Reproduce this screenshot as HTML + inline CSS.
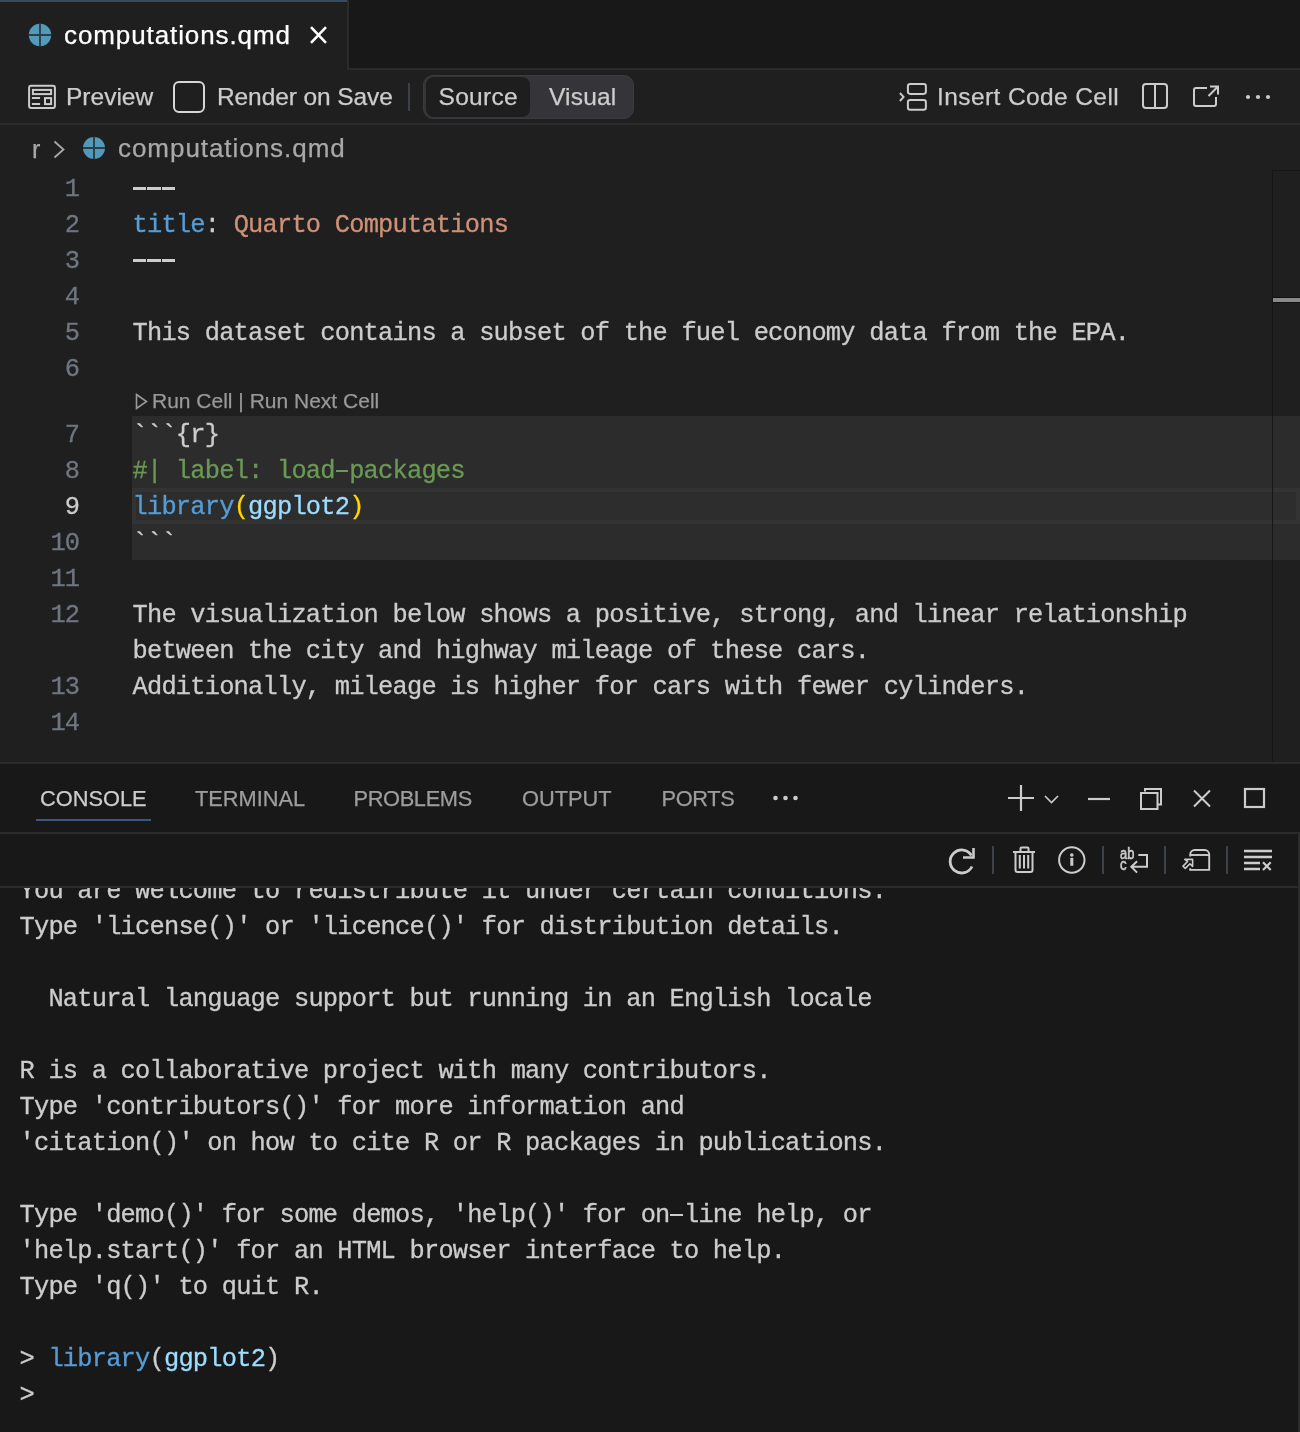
<!DOCTYPE html>
<html><head><meta charset="utf-8">
<style>
*{margin:0;padding:0;box-sizing:border-box}
html,body{width:1300px;height:1432px;overflow:hidden;background:#1f1f1f}
body{position:relative;font-family:"Liberation Sans",sans-serif;color:#cccccc}
.abs{position:absolute}
.ui{position:absolute;font-family:"Liberation Sans",sans-serif;white-space:pre;-webkit-text-stroke:0.25px currentColor}
.tb{font-size:24.5px;line-height:30px;color:#cccccc;top:82px}
.mono{font-family:"Liberation Mono",monospace;white-space:pre;font-size:25.4px;letter-spacing:-0.792px;line-height:36px;-webkit-text-stroke:0.3px currentColor}
.dash{display:inline-block;width:14.45px;height:36px;position:relative;vertical-align:top}
.hy{display:inline-block;width:14.45px;height:36px;position:relative;vertical-align:top}
.hy::after{content:"";position:absolute;left:0.8px;right:0.8px;top:15.6px;height:2.4px;background:currentColor}
.dash::after{content:"";position:absolute;left:0.5px;right:0.5px;top:15px;height:3px;background:currentColor}
.ln{position:absolute;left:0;width:79.3px;text-align:right;color:#6e7681}
.code{position:absolute;left:132.5px;color:#cccccc}
.ptab{position:absolute;top:785px;font-size:21.8px;line-height:28px;color:#9d9d9d}
.con{position:absolute;left:19.5px;color:#cccccc}
.sep{position:absolute;width:2px;background:#3b4147}
#icons{position:absolute;left:0;top:0;width:1300px;height:1432px;overflow:visible}
</style></head><body><div style="position:absolute;left:0;top:0;width:1300px;height:1432px;will-change:transform">

<!-- tab bar -->
<div class="abs" style="left:0;top:0;width:1300px;height:70px;background:#181818;border-bottom:2px solid #2b2b2b"></div>
<div class="abs" style="left:0;top:0;width:347px;height:70px;background:#1f1f1f;border-top:2px solid #344b60"></div>
<div class="abs" style="left:347px;top:0;width:2px;height:70px;background:#2b2b2b"></div>
<div class="ui" style="left:64px;top:18px;font-size:26px;line-height:34px;color:#ffffff;letter-spacing:0.9px">computations.qmd</div>

<!-- toolbar -->
<div class="abs" style="left:0;top:70px;width:1300px;height:55px;background:#1f1f1f;border-bottom:2px solid #2b2b2b"></div>
<div class="ui tb" style="left:66px">Preview</div>
<div class="abs" style="left:173px;top:81px;width:32px;height:32px;border:2px solid #d6d6d6;border-radius:6px"></div>
<div class="ui tb" style="left:217px;letter-spacing:-0.1px">Render on Save</div>
<div class="sep" style="left:408px;top:83px;height:28px"></div>
<div class="abs" style="left:423px;top:75px;width:211px;height:44px;background:#353439;border:1px solid #3b3a41;border-radius:10px"></div>
<div class="abs" style="left:426px;top:77px;width:104px;height:40px;background:#1e1e1e;border-radius:8px"></div>
<div class="ui tb" style="left:438.5px;letter-spacing:0.3px">Source</div>
<div class="ui tb" style="left:549px;letter-spacing:0.2px">Visual</div>
<div class="ui tb" style="left:937px;letter-spacing:0.4px">Insert Code Cell</div>

<!-- breadcrumb -->
<div class="ui" style="left:32px;top:134px;font-size:25px;line-height:30px;color:#a9a9a9">r</div>
<div class="ui" style="left:118px;top:133px;font-size:26px;line-height:30px;color:#a9a9a9;letter-spacing:0.95px">computations.qmd</div>

<!-- editor -->
<div class="abs" style="left:132px;top:416px;width:1168px;height:144px;background:#2c2c2c"></div>
<div class="abs" style="left:132px;top:488px;width:1168px;height:36px;border:4px solid #333333;background:#2d2d2d"></div>
<div class="abs" style="left:1272px;top:170px;width:28px;height:592px;border-left:1px solid #15151a;border-top:1px solid #15151a"></div>
<div class="abs" style="left:1273px;top:297px;width:27px;height:6px;background:#8a8a8a;border-top:1px solid #111;border-bottom:1px solid #111"></div>

<div class="mono">
<div class="ln" style="top:172px">1</div>
<div class="ln" style="top:208px">2</div>
<div class="ln" style="top:244px">3</div>
<div class="ln" style="top:280px">4</div>
<div class="ln" style="top:316px">5</div>
<div class="ln" style="top:352px">6</div>
<div class="ln" style="top:418px">7</div>
<div class="ln" style="top:454px">8</div>
<div class="ln" style="top:490px;color:#cccccc">9</div>
<div class="ln" style="top:526px">10</div>
<div class="ln" style="top:562px">11</div>
<div class="ln" style="top:598px">12</div>
<div class="ln" style="top:670px">13</div>
<div class="ln" style="top:706px">14</div>

<div class="code" style="top:172px"><span class="dash"></span><span class="dash"></span><span class="dash"></span></div>
<div class="code" style="top:208px"><span style="color:#569cd6">title</span>: <span style="color:#ce9178">Quarto Computations</span></div>
<div class="code" style="top:244px"><span class="dash"></span><span class="dash"></span><span class="dash"></span></div>
<div class="code" style="top:316px">This dataset contains a subset of the fuel economy data from the EPA.</div>
<div class="code" style="top:418px">```{r}</div>
<div class="code" style="top:454px;color:#6a9955">#| label: load<span class="hy"></span>packages</div>
<div class="code" style="top:490px"><span style="color:#569cd6">library</span><span style="color:#ffd700">(</span><span style="color:#9cdcfe">ggplot2</span><span style="color:#ffd700">)</span></div>
<div class="code" style="top:526px">```</div>
<div class="code" style="top:598px">The visualization below shows a positive, strong, and linear relationship</div>
<div class="code" style="top:634px">between the city and highway mileage of these cars.</div>
<div class="code" style="top:670px">Additionally, mileage is higher for cars with fewer cylinders.</div>
</div>

<div class="ui" style="left:152px;top:388px;font-size:21px;line-height:26px;color:#999999">Run Cell | Run Next Cell</div>

<!-- panel -->
<div class="abs" style="left:0;top:762px;width:1300px;height:670px;background:#181818;border-top:2px solid #2b2b2b"></div>
<div class="abs" style="left:0;top:832px;width:1300px;height:2px;background:#2b2b2b"></div>
<div class="abs" style="left:0;top:886px;width:1300px;height:2px;background:#2b2b2b"></div>
<div class="abs" style="left:1298px;top:832px;width:2px;height:600px;background:#2b2b2b"></div>

<div class="ptab ui" style="left:40px;color:#cccccc">CONSOLE</div>
<div class="abs" style="left:36px;top:819px;width:115px;height:2px;background:#3a5a7a"></div>
<div class="ptab ui" style="left:195px">TERMINAL</div>
<div class="ptab ui" style="left:353.5px;letter-spacing:-0.35px">PROBLEMS</div>
<div class="ptab ui" style="left:522px">OUTPUT</div>
<div class="ptab ui" style="left:661.5px;letter-spacing:-0.35px">PORTS</div>

<div class="sep" style="left:992px;top:846px;height:28px"></div>
<div class="sep" style="left:1102px;top:846px;height:28px"></div>
<div class="sep" style="left:1164px;top:846px;height:28px"></div>
<div class="sep" style="left:1226px;top:846px;height:28px"></div>

<!-- console text -->
<div class="mono" style="position:absolute;left:0;top:0;width:1300px;height:1432px;clip-path:inset(888px 0 0 0)">
<div class="con" style="top:874px">You are welcome to redistribute it under certain conditions.</div>
<div class="con" style="top:910px">Type 'license()' or 'licence()' for distribution details.</div>
<div class="con" style="top:982px">  Natural language support but running in an English locale</div>
<div class="con" style="top:1054px">R is a collaborative project with many contributors.</div>
<div class="con" style="top:1090px">Type 'contributors()' for more information and</div>
<div class="con" style="top:1126px">'citation()' on how to cite R or R packages in publications.</div>
<div class="con" style="top:1198px">Type 'demo()' for some demos, 'help()' for on<span class="hy"></span>line help, or</div>
<div class="con" style="top:1234px">'help.start()' for an HTML browser interface to help.</div>
<div class="con" style="top:1270px">Type 'q()' to quit R.</div>
<div class="con" style="top:1342px">&gt; <span style="color:#569cd6">library</span>(<span style="color:#9cdcfe">ggplot2</span>)</div>
<div class="con" style="top:1378px">&gt;</div>
</div>

<!-- ICONS (page coordinates) -->
<svg id="icons" viewBox="0 0 1300 1432" fill="none" stroke="#cccccc" stroke-width="2">
  <!-- tab globe -->
  <circle cx="40" cy="35" r="11.2" fill="#519aba" stroke="none"/>
  <path d="M40 23.8V46.2M28.8 35H51.2" stroke="#2f3e46" stroke-width="1.9"/>
  <!-- tab close -->
  <path d="M311 27.2L326 42.8M326 27.2L311 42.8" stroke="#ffffff" stroke-width="2.6"/>

  <!-- preview icon -->
  <rect x="29.1" y="85.8" width="25.8" height="22.3" rx="2"/>
  <rect x="32.9" y="89.9" width="18.2" height="4.2"/>
  <path d="M31.9 98H40.1M31.9 104H40.1"/>
  <rect x="45" y="98.1" width="6.1" height="6"/>

  <!-- insert code cell -->
  <path d="M899.9 93L903.6 97L899.9 101" stroke-width="1.9"/>
  <rect x="907.9" y="84.1" width="18" height="9.8" rx="2.3"/>
  <rect x="907.9" y="100" width="18" height="9.8" rx="2.3"/>
  <!-- split -->
  <rect x="1143" y="84" width="24" height="24" rx="3"/>
  <path d="M1155 84V108"/>
  <!-- open external -->
  <path d="M1207 88H1196A2 2 0 0 0 1194 90V104A2 2 0 0 0 1196 106H1214A2 2 0 0 0 1216 104V97"/>
  <path d="M1208.5 96L1217.5 87M1210 86.5H1218V94.5"/>
  <!-- more -->
  <circle cx="1248" cy="97" r="2.1" fill="#cccccc" stroke="none"/>
  <circle cx="1258" cy="97" r="2.1" fill="#cccccc" stroke="none"/>
  <circle cx="1268" cy="97" r="2.1" fill="#cccccc" stroke="none"/>

  <!-- breadcrumb chevron + globe -->
  <path d="M54.5 141.5L63.5 149.5L54.5 157.5" stroke="#a9a9a9" stroke-width="1.8"/>
  <circle cx="94" cy="148" r="11" fill="#519aba" stroke="none"/>
  <path d="M94 137V159M83 148H105" stroke="#2f3e46" stroke-width="1.9"/>

  <!-- codelens triangle -->
  <path d="M136.5 394.5L146.5 401.5L136.5 408.5Z" stroke="#999999" stroke-width="1.6"/>

  <!-- panel dots -->
  <circle cx="775.5" cy="798" r="2.3" fill="#cccccc" stroke="none"/>
  <circle cx="785.5" cy="798" r="2.3" fill="#cccccc" stroke="none"/>
  <circle cx="795.5" cy="798" r="2.3" fill="#cccccc" stroke="none"/>

  <!-- panel right icons -->
  <path d="M1021 785V811M1008 798H1034" stroke-width="2.2"/>
  <path d="M1045 796L1051.5 802.5L1058 796" stroke-width="1.6"/>
  <path d="M1088 799H1110" stroke-width="2.2"/>
  <path d="M1145 791.5V789H1161V804.5H1158"/>
  <rect x="1141" y="793" width="16.5" height="16"/>
  <path d="M1194 790.5L1210 806.5M1210 790.5L1194 806.5"/>
  <rect x="1245" y="789" width="19" height="18" stroke-width="2.2"/>

  <!-- console toolbar icons -->
  <!-- refresh -->
  <path d="M971.5 855.5A11.5 11.5 0 1 0 972 866.5" stroke-width="2.8"/>
  <path d="M973.5 848V857.5H963" stroke-width="2.6"/>
  <!-- trash -->
  <path d="M1013 852H1035"/>
  <path d="M1020.5 851.5V848.5A1 1 0 0 1 1021.5 847.5H1027.5A1 1 0 0 1 1028.5 848.5V851.5"/>
  <path d="M1015.5 852V870A2 2 0 0 0 1017.5 872H1030.5A2 2 0 0 0 1032.5 870V852"/>
  <path d="M1019.8 855V868.5M1024 855V868.5M1028.2 855V868.5"/>
  <!-- info -->
  <circle cx="1071.8" cy="860" r="12.7"/>
  <circle cx="1071.8" cy="855" r="1.8" fill="#cccccc" stroke="none"/>
  <path d="M1071.8 857.8V865.8" stroke-width="3"/>
  <!-- wrap -->
  <text x="1120" y="858.8" font-family="Liberation Sans" font-size="16" fill="#cccccc" stroke="#cccccc" stroke-width="0.6" textLength="14.3" lengthAdjust="spacingAndGlyphs">ab</text>
  <text x="1120" y="869.8" font-family="Liberation Sans" font-size="16" fill="#cccccc" stroke="#cccccc" stroke-width="0.6" textLength="6.6" lengthAdjust="spacingAndGlyphs">c</text>
  <path d="M1138.3 855H1147V866.8H1131.5M1137.1 861.2L1131.3 866.8L1137.1 872.6"/>
  <!-- icon5 -->
  <path d="M1190.2 856.5V854.5A4.5 4.5 0 0 1 1194.7 850H1204.7A4.5 4.5 0 0 1 1209.2 854.5V869.9H1190.2V868.3" stroke-width="1.9"/>
  <path d="M1190.2 855H1209.2" stroke-width="1.9"/>
  <path d="M1184.8 859.4H1192.6V866.5L1189.9 863.8L1185.3 868.4L1183 866.1L1187.6 861.5Z" stroke-width="1.6" stroke-linejoin="round"/>
  <!-- clear -->
  <path d="M1244 851H1272M1244 857H1272M1244 863H1260M1244 869H1260" stroke-width="2.3"/>
  <path d="M1263 862.3L1270.7 870M1270.7 862.3L1263 870" stroke-width="2.2"/>
</svg>

</div></body></html>
